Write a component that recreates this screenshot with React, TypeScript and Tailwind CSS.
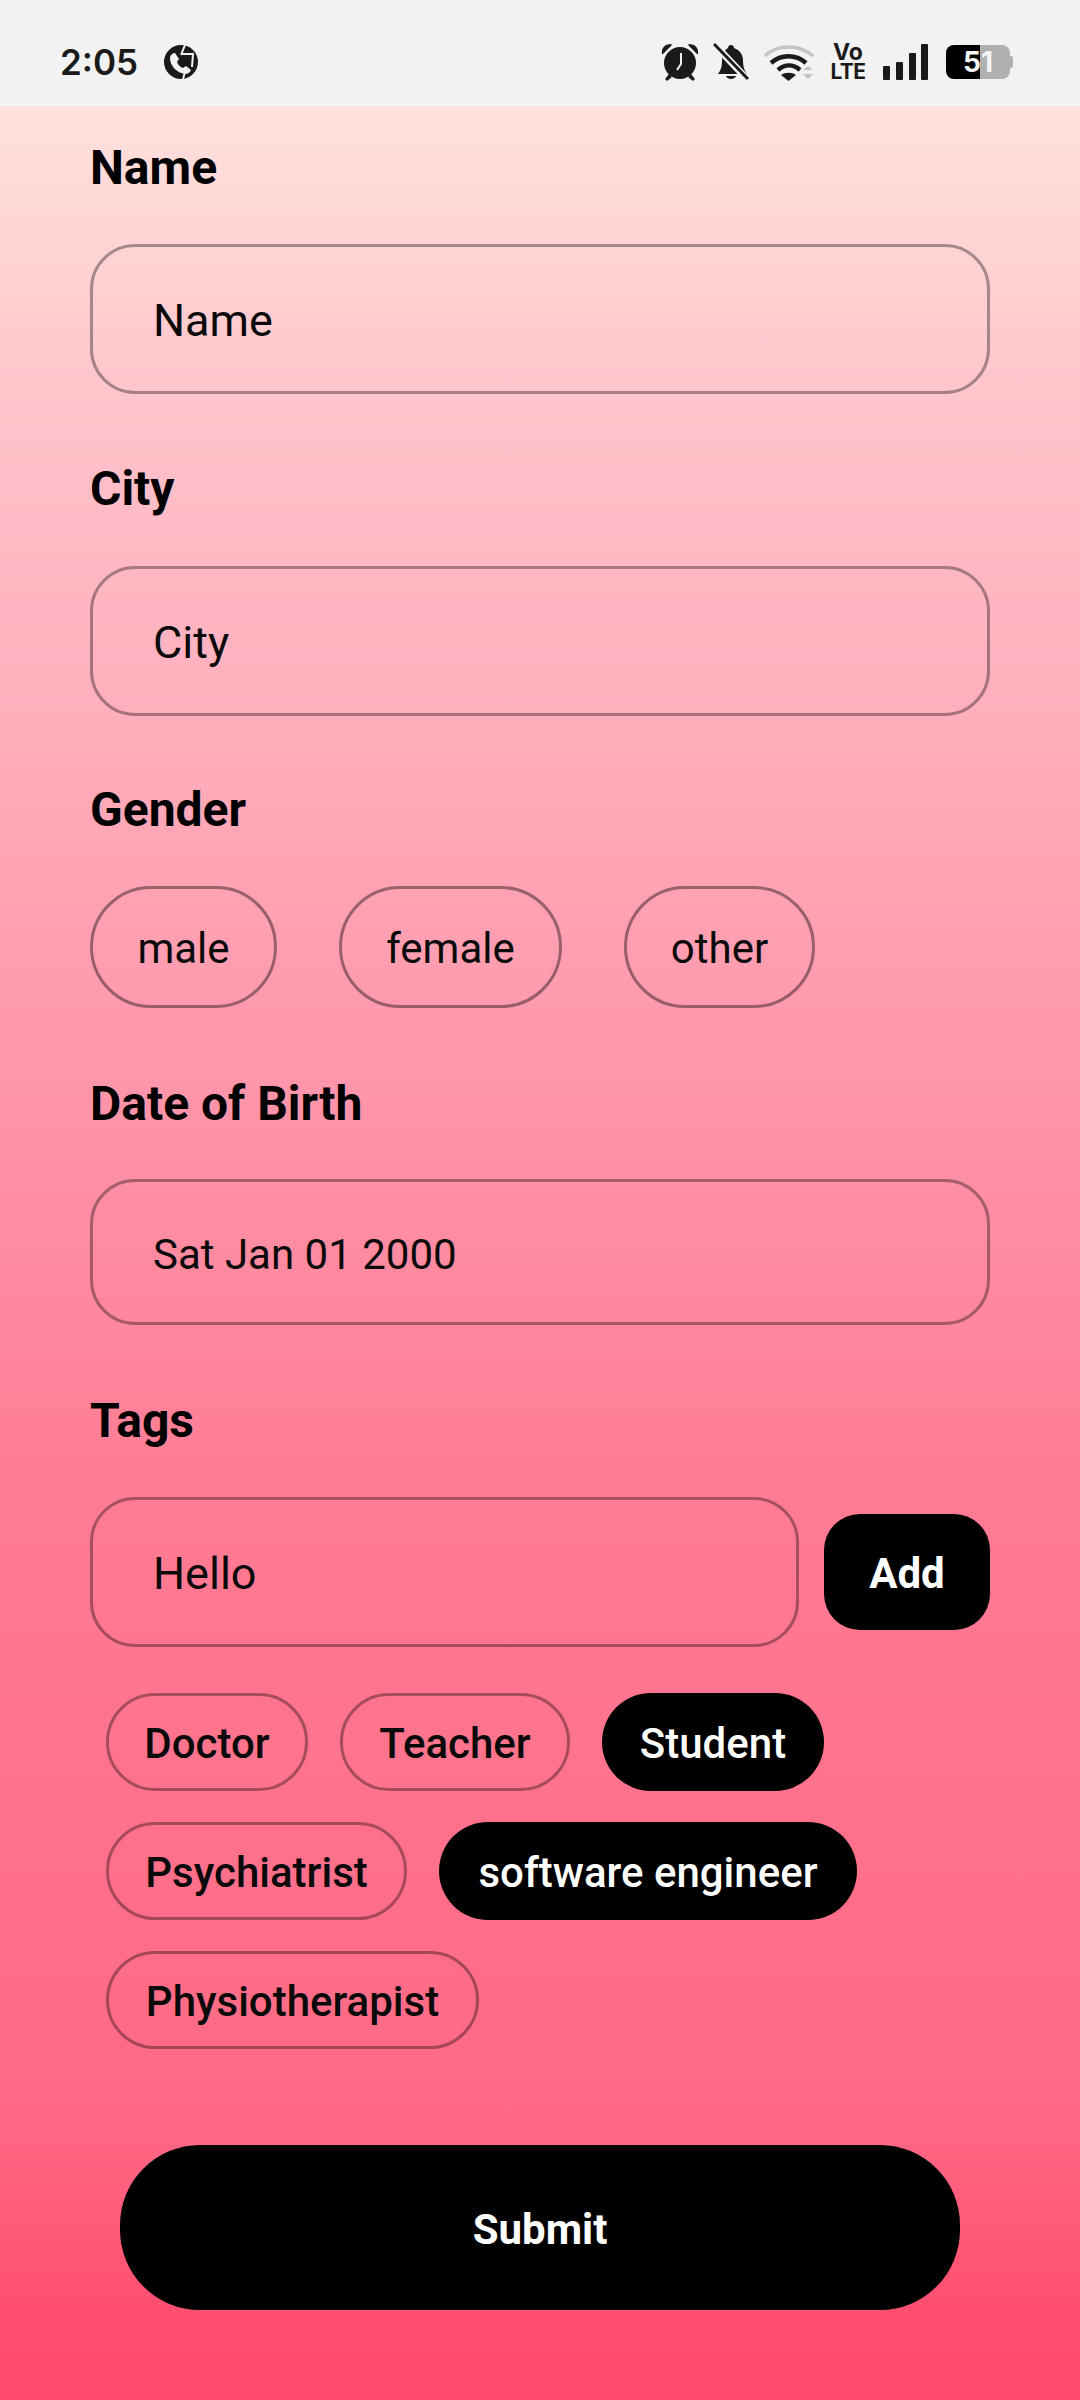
const font = { fontFamily: 'Roboto, sans-serif' };

function Label({ children, className }: { children: React.ReactNode; className: string }) {
  return <div className={`text-[48px] leading-[54px] font-bold text-black ${className}`}>{children}</div>;
}

function Field({ text, h, size = 'text-[45px]', className = '' }: { text: string; h: string; size?: string; className?: string }) {
  return (
    <div className={`flex items-center pl-[60px] pt-[4px] rounded-[45px] border-[3px] border-black/35 text-[#0a0a0a] ${size} ${h} ${className}`}>
      {text}
    </div>
  );
}

function Radio({ text, w }: { text: string; w: string }) {
  return (
    <div className={`flex h-[122px] items-center justify-center pt-[3px] rounded-full border-[3px] border-black/40 text-[42px] text-[#0a0a0a] ${w}`}>
      {text}
    </div>
  );
}

function Tag({ text, w, on }: { text: string; w: string; on?: boolean }) {
  return (
    <div className={`flex h-[98px] items-center justify-center pt-[2px] rounded-full text-[42px] font-medium ${w} ${on ? 'bg-black text-white' : 'border-[3px] border-black/35 text-[#0a0a0a]'}`}>
      {text}
    </div>
  );
}

function StatusIcons() {
  return (
    <div className="flex items-center">
      <svg width="38" height="38" viewBox="0 0 38 38" fill="#1a1a1a">
        <path d="M1 11C0 5 4 1 10 1c1 0 1 1 0 2L3 10c-1 1-2 2-2 1Z" />
        <path d="M37 11c1-6-3-10-9-10-1 0-1 1 0 2l7 7c1 1 2 2 2 1Z" />
        <circle cx="19" cy="20" r="16" />
        <path d="m8 31-4 5 2 2 5-4Zm22 0 4 5-2 2-5-4Z" />
        <path d="M20 10v11l-4 6" stroke="#f2f2f2" strokeWidth="2" fill="none" />
      </svg>
      <svg width="36" height="38" viewBox="0 0 36 38" className="ml-[14px]" fill="#1a1a1a">
        <path d="M15 5c0-4 6-4 6 0 6 2 9 7 9 13 0 5 1 9 4 13H5c3-4 4-8 4-13 0-6 2-11 6-13Z" />
        <path d="M13 33h10c-1 4-9 4-10 0Z" />
        <path d="M1 1 35 37" stroke="#f2f2f2" strokeWidth="7" />
        <path d="M1 1 35 36" stroke="#1a1a1a" strokeWidth="3" />
      </svg>
      <svg width="52" height="38" viewBox="0 0 52 38" className="ml-[14px]" fill="none">
        <path d="M2 13C14 1 36 1 50 13" stroke="#c4c4c4" strokeWidth="3.500" />
        <path d="M8 20C18 11 33 11 43 20" stroke="#1a1a1a" strokeWidth="4.500" />
        <path d="M15 27c7-6 15-6 22 0" stroke="#1a1a1a" strokeWidth="4.500" />
        <path d="M18 32c4-3 11-3 15 0l-7.500 6Z" fill="#1a1a1a" />
        <path d="m40 27 5-4 5 4ZM40 31l5 5 5-5Z" fill="#c4c4c4" />
      </svg>
      <div className="ml-[16px] flex w-[34px] flex-col items-center font-bold text-[#1a1a1a]" style={{ fontFamily: 'Inter, sans-serif' }}>
        <span className="text-[23px] leading-[19px]">Vo</span>
        <span className="text-[21px] leading-[19px] tracking-[-0.5px]">LTE</span>
      </div>
      <svg width="46" height="36" viewBox="0 0 46 36" className="ml-[18px]" fill="#1a1a1a">
        <rect x="0" y="22" width="7" height="14" rx="1" />
        <rect x="13" y="18" width="7" height="18" rx="1" />
        <rect x="26" y="9" width="7" height="27" rx="1" />
        <rect x="38" y="0" width="7" height="36" rx="1" />
      </svg>
      <div className="ml-[17px] flex items-center">
        <div className="relative flex h-[34px] w-[64px] overflow-hidden rounded-[8px] bg-[#b0b0b0]">
          <div className="h-full w-[34px] bg-black" />
          <div className="absolute inset-0 flex items-center justify-center text-[28px] font-bold text-[#f5f5f5]" style={{ fontFamily: 'Inter, sans-serif' }}>51</div>
        </div>
        <div className="h-[12px] w-[3px] rounded-r-[2px] bg-[#b0b0b0]" />
      </div>
    </div>
  );
}

export default function App() {
  return (
    <div className="flex h-[2400px] w-[1080px] flex-col overflow-hidden" style={font}>
      <div className="flex h-[106px] shrink-0 items-center justify-between bg-[#f2f2f2] pl-[60px] pr-[67px] pt-[17px]">
        <div className="flex items-center">
          <span className="text-[35px] font-semibold leading-[40px] text-[#1a1a1a]" style={{ fontFamily: 'Inter, sans-serif' }}>2:05</span>
          <svg width="34" height="34" viewBox="0 0 34 34" className="ml-[26px]">
            <circle cx="17" cy="17" r="17" fill="#1a1a1a" />
            <path d="M6 13c0-3 3-5 5-5l4 6-2 3c1 3 3 5 6 6l3-2 5 4c-1 3-4 4-6 4-8-1-15-8-15-16Z" fill="#f2f2f2" />
            <path d="M21 0 17 10M17 9h12l-1 13M19 34l2-7" stroke="#f2f2f2" strokeWidth="2" fill="none" />
          </svg>
        </div>
        <StatusIcons />
      </div>

      <div className="flex flex-1 flex-col bg-[linear-gradient(180deg,#ffe1dd_0%,#ffc2ca_14%,#ff9cb0_38%,#ff7a92_62%,#ff6884_88%,#ff4f70_96%,#ff4a6c_100%)] pl-[90px] pr-[90px]">
        <Label className="mt-[35px]">Name</Label>
        <Field text="Name" h="h-[150px]" className="mt-[49px]" />
        <Label className="mt-[68px]">City</Label>
        <Field text="City" h="h-[150px]" className="mt-[50px]" />
        <Label className="mt-[67px]">Gender</Label>
        <div className="mt-[49px] flex gap-[62px]">
          <Radio text="male" w="w-[187px]" />
          <Radio text="female" w="w-[223px]" />
          <Radio text="other" w="w-[191px]" />
        </div>
        <Label className="mt-[69px]">Date of Birth</Label>
        <Field text="Sat Jan 01 2000" h="h-[146px]" size="text-[42px]" className="mt-[48px]" />
        <Label className="mt-[69px]">Tags</Label>
        <div className="mt-[49px] flex items-center gap-[25px]">
          <Field text="Hello" h="h-[150px]" className="w-[709px]" />
          <div className="flex h-[116px] w-[166px] items-center justify-center pt-[2px] rounded-[36px] bg-black text-[42px] font-bold text-white">Add</div>
        </div>
        <div className="mt-[46px] flex flex-col gap-[31px] pl-[16px]">
          <div className="flex gap-[32px]">
            <Tag text="Doctor" w="w-[202px]" />
            <Tag text="Teacher" w="w-[230px]" />
            <Tag text="Student" w="w-[222px]" on />
          </div>
          <div className="flex gap-[32px]">
            <Tag text="Psychiatrist" w="w-[301px]" />
            <Tag text="software engineer" w="w-[418px]" on />
          </div>
          <div className="flex gap-[32px]">
            <Tag text="Physiotherapist" w="w-[373px]" />
          </div>
        </div>
        <div className="ml-[30px] mt-[96px] flex h-[165px] w-[840px] items-center justify-center pt-[4px] rounded-[80px] bg-black text-[42px] font-bold text-white">Submit</div>
      </div>
    </div>
  );
}
